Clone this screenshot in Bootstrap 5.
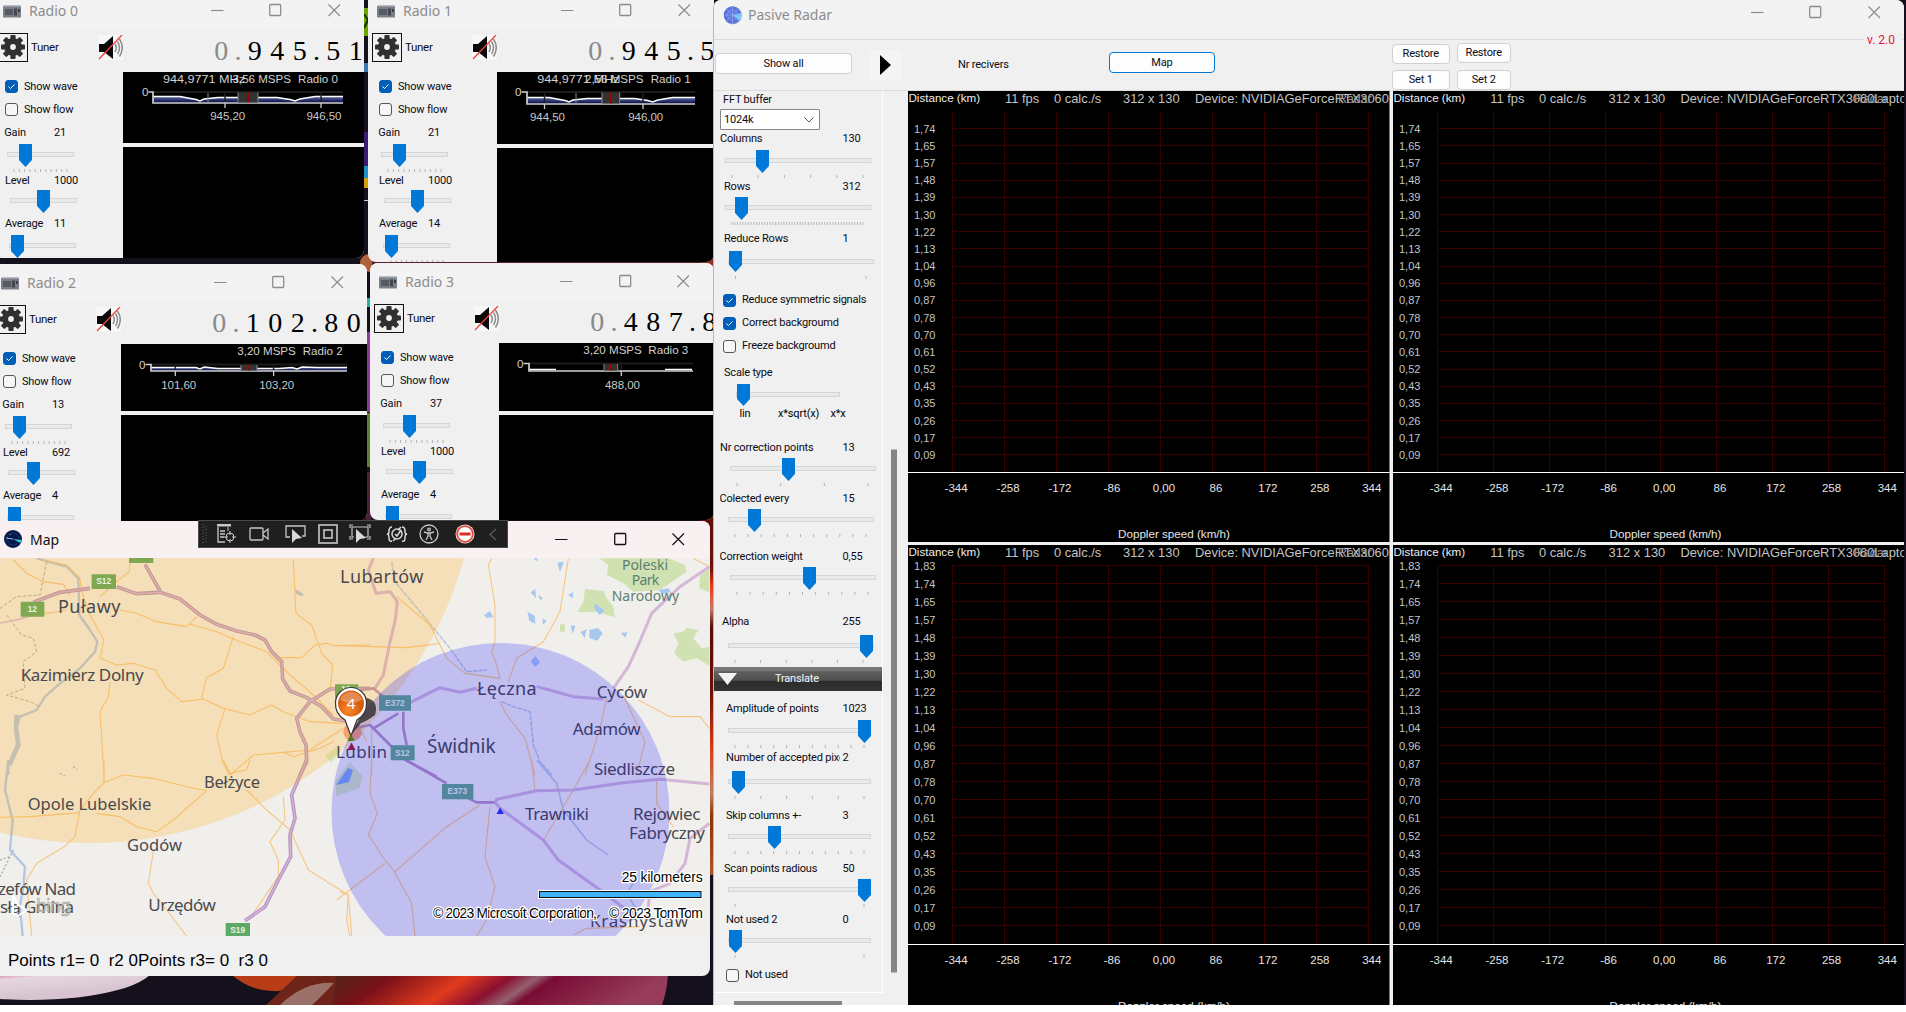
<!DOCTYPE html>
<html lang="en">
<head>
<meta charset="utf-8">
<title>Pasive Radar</title>
<link href="https://cdn.jsdelivr.net/npm/bootstrap@5.3.0/dist/css/bootstrap.min.css" rel="stylesheet">
<style>
html,body{width:1906px;height:1012px;overflow:hidden;margin:0;background:#fff}
body{font-family:Roboto,"Liberation Sans",sans-serif;font-size:11px;line-height:16px;letter-spacing:-.18px;color:#0b0b14}
svg{display:block;flex:none}
.desk{position:relative;width:1906px;height:1005px;overflow:hidden;background:#15111c}
.wall{position:absolute;left:0;top:0}
.win{position:absolute;background:#f0f0f0;overflow:hidden;border-radius:8px;display:flex;flex-direction:column}
.tbar{flex:none;background:#f3f3f3;color:#8c8c8c;font:14px/20px "Noto Sans",sans-serif;letter-spacing:0;white-space:pre}
.w-radio .tbar{height:37px;padding:9px 1px 8px 9px}
.w-radio .wbtns{margin-top:2px}
.wbtns{display:flex;margin-left:auto;color:#8c8c8c}
.wbtns svg{width:58.5px;height:14px}
.w-radio .tools{height:43px;flex:none;padding-bottom:7px}
.gearbox{width:30.5px;height:29px;margin-left:3.5px;border:1px solid #111}
.tune{margin-left:3px;width:67px;font-size:11.5px;letter-spacing:-.3px}
.freq{margin-left:87px;margin-top:3px;font:28px/30px "Liberation Serif",serif;letter-spacing:0;color:#000}
.freq span{width:22.5px;text-align:center;flex:none}
.freq .dot{width:11px}
.freq .dim{color:#8a8a8a}
.w-radio .side{width:129px;flex:none;padding-top:3px}
.view{background:#000}
.ck{height:23px;display:flex;align-items:center}
.ck i{width:13px;height:13px;border:1px solid #555;border-radius:3px;background:#f6f6f6;margin-right:6px;flex:none}
.ck i.on{background:#005fb8;border-color:#005fb8}
.lab{height:16px;line-height:18px;display:flex;white-space:nowrap}
.lab span:first-child{overflow:hidden;flex:none}
.w-main{left:713px;top:0;width:1191px;height:1005px;border-radius:8px 8px 0 0;border-left:1px solid #b9b9b9}
.w-main .tbar{height:33px;padding:5px 1px 0 9px}
.gbox{position:relative;height:52px;margin-top:6px;border-top:1px solid #dcdcdc;border-bottom:1px solid #dcdcdc;flex:none}
.ver{position:absolute;right:2px;top:-8px;padding:0 7px 0 3px;background:#f0f0f0;color:#dc143c;font-size:12px;letter-spacing:0}
.pbtn{background:#fdfdfd;border:1px solid #d0d0d0;border-radius:4px;height:20px;line-height:18px;padding:0;font-size:11px;text-align:center;color:#0b0b14;letter-spacing:-.15px}
.panel{width:169px;height:902px;border-right:1px solid #fff;border-bottom:1px solid #fff;overflow:hidden}
.combo{width:100px;height:21px;border:1px solid #868686;background:#fff;margin-left:6px;padding:0 5px 0 3px;border-radius:1px}
.trans{height:24px;margin-top:2px;color:#f5f5f5;background:linear-gradient(#777 0,#777 15%,#5f5f5f 20%,#505050 55%,#2c2c2c 60%,#333)}
.trans span{margin-left:38px}
.gutter{width:25px}
.plots{display:grid;grid-template-columns:481.5px 511px;grid-template-rows:451px 460px;gap:3px 3.5px}
.w-map{left:-6px;top:521px;width:715.5px;height:455px;border-radius:8px}
.w-map .tbar{height:37px;background:#f9f0f2;color:#111;padding:9px 2px 0 10px}
.w-map .wbtns{color:#111;margin-top:2px}
.status{height:40px;padding:15px 0 0 14px;font:17px/20px "Liberation Sans",sans-serif;letter-spacing:0;white-space:pre;color:#000}
.dbg{position:absolute;left:198px;top:520px;height:28px;width:310px;background:#1f1f1f;border:1px solid #4a4a4a;align-items:center;display:flex}
.dbg svg{width:32px;height:20px}
.dbg .sep{width:1px;height:16px;background:#3a3a3a;margin:0 2px 0 3px}
.aria text,.wave text{font-family:"Liberation Sans",sans-serif;letter-spacing:0}
.mapv text{font-family:"Noto Sans",sans-serif;fill:#4a4a4e;letter-spacing:0}
.mapv .rd{fill:none;stroke:#f6c682;stroke-width:3.3;stroke-linejoin:round}
.mapv .hw{fill:none;stroke:#b894bf;stroke-width:11;stroke-linejoin:round}
.mapv .hi{fill:none;stroke:#d3b6d8;stroke-width:4;stroke-linejoin:round}
.mapv .rv{fill:none;stroke:#b4c6e0;stroke-width:7;stroke-linejoin:round}
.mapv .pk{fill:#d0e2b2}
.mapv .lk{fill:#a8c7ef}
.mapv .bt text{fill:#e9f4e4;font:bold 25px "Liberation Sans",sans-serif;text-anchor:middle}
.mapv .sys{font:14px "Liberation Sans",sans-serif;fill:#000;stroke:#fff;stroke-width:2.5px;paint-order:stroke}
</style>
<script src="https://cdn.jsdelivr.net/npm/bootstrap@5.3.0/dist/js/bootstrap.bundle.min.js"></script>
</head>
<body>
<svg width="0" height="0" class="position-absolute">
<defs>
<symbol id="gear" viewBox="-12 -12 24 24"><g fill="#303030"><circle r="9"/><g id="teeth"><rect x="-2.6" y="-12" width="5.2" height="24" rx="1"/><rect x="-12" y="-2.6" width="24" height="5.2" rx="1"/></g><use href="#teeth" transform="rotate(45)"/></g><circle r="2.9" fill="#f0f0f0"/></symbol>
<symbol id="spk" viewBox="0 0 25 25"><rect width="25" height="25" fill="#f7f7f7"/><path d="M1 9h5l9-8v23l-9-7H1z" fill="#0a0a0a"/><path d="M17 9q2.5 3.5 0 8M19.500 6.500q4 6 0 12.500M21.500 4q5.500 8.500 0 17.500" fill="none" stroke="#8b8b8b" stroke-width="1.500"/><path d="M1 24L24 0" stroke="#f04040" stroke-width="1.300"/></symbol>
<symbol id="rad" viewBox="0 0 18 13"><rect width="18" height="13" rx="1" fill="#b9bbc0"/><rect x="0" y="1.500" width="18" height="10.500" fill="#7b8088"/><rect x="2" y="4" width="8" height="6" fill="#575b63"/><rect x="11" y="3.500" width="3" height="7" fill="#444850"/><rect x="15" y="4" width="2" height="3" fill="#3b3e45"/></symbol>
<symbol id="wmin" viewBox="0 0 58.5 14"><path d="M23 7.500h12.500" stroke="currentColor" stroke-width="1.200"/></symbol>
<symbol id="wmax" viewBox="0 0 58.5 14"><rect x="23.700" y="1.500" width="11" height="11" rx="1" fill="none" stroke="currentColor" stroke-width="1.300"/></symbol>
<symbol id="wcls" viewBox="0 0 58.5 14"><path d="M23.500 1.500l11.500 11.500M35 1.500L23.500 13" stroke="currentColor" stroke-width="1.200"/></symbol>
<linearGradient id="navy" x2="0" y2="1"><stop offset="0" stop-color="#5a6aa5"/><stop offset="1" stop-color="#06063c"/></linearGradient>
<radialGradient id="pin" cx=".4" cy=".75"><stop offset="0" stop-color="#f98a2c"/><stop offset="1" stop-color="#d65a08"/></radialGradient>
<linearGradient id="w1" x2=".3" y2="1"><stop offset="0" stop-color="#c81844"/><stop offset=".6" stop-color="#d83a62"/><stop offset=".75" stop-color="#e6d6df"/><stop offset="1" stop-color="#d8c4d0"/></linearGradient>
<linearGradient id="w2" y2=".15"><stop offset="0" stop-color="#4a2a18"/><stop offset=".2" stop-color="#7a1018"/><stop offset=".42" stop-color="#e03a1e"/><stop offset=".55" stop-color="#8a1030"/><stop offset=".63" stop-color="#946070"/><stop offset=".68" stop-color="#7a0c34"/><stop offset="1" stop-color="#963c5a"/></linearGradient>
<linearGradient id="w3" x2="0" y2="1"><stop offset="0" stop-color="#5c0c08"/><stop offset=".17" stop-color="#6c1408"/><stop offset=".22" stop-color="#f03814"/><stop offset=".28" stop-color="#c87868"/><stop offset=".33" stop-color="#5a0c06"/><stop offset=".5" stop-color="#6c1004"/><stop offset=".66" stop-color="#d83c14"/><stop offset=".78" stop-color="#c08060"/><stop offset=".84" stop-color="#8c3404"/><stop offset="1" stop-color="#b05030"/></linearGradient>
</defs>
</svg>
<div class="desk">
<svg class="wall" width="1906" height="1005">
<g><rect x="363" y="8" width="6" height="28" fill="#6aa800"/><path d="M364 14l4 6-4 8" stroke="#16300a" fill="none" stroke-width="2"/><rect x="363" y="63" width="6" height="9" fill="#3a78b8"/><rect x="363" y="132" width="6" height="56" fill="#3c1a78"/><rect x="363" y="166" width="6" height="12" fill="#1e92c8"/><rect x="363" y="178" width="6" height="10" fill="#d8a000"/><rect x="363" y="200" width="6" height="1" fill="#ccc"/></g>
<circle cx="369" cy="263" r="9" fill="#b0603a"/><rect x="372" y="261" width="342" height="5" fill="#54202a"/><rect x="700" y="255" width="14" height="16" fill="#93301e"/>
<rect x="366" y="298" width="5" height="9" fill="#22b5a5"/><rect x="366" y="332" width="5" height="80" fill="#8a3a98"/><rect x="366" y="413" width="5" height="54" fill="#5c8034"/><rect x="366" y="472" width="5" height="50" fill="#4c2036"/>
<rect x="700" y="505" width="14" height="370" fill="url(#w3)"/>
<ellipse cx="30" cy="966" rx="124" ry="34" fill="url(#w1)"/><path d="M232 975q25 22 62 14l46-18z" fill="#b83c16"/><path d="M266 1005l34-32h60v32z" fill="#6e2418"/><path d="M280 1005q25-24 54-22-15 16-22 22z" fill="#9a7068"/><path d="M338 970h330q0 18-6 35H332z" fill="url(#w2)"/>
</svg>
<div id="radios"></div>

<section class="win w-map">
<header class="tbar d-flex">
<svg width="18" height="18" viewBox="-9 -9 18 18" class="mt-0"><circle r="9" fill="#061a4c"/><circle r="6" fill="none" stroke="#2a3c80" stroke-width=".6"/><path d="M0 0L7.500 4 8.700 1z" fill="#38d0d8"/><path d="M-7-1L0 0M-3-5l.6.6" stroke="#9fb8d8"/></svg>
<span class="ps-2">Map</span>
<span class="wbtns"><svg><use href="#wmin"/></svg><svg><use href="#wmax"/></svg><svg><use href="#wcls"/></svg></span>
</header>
<svg class="mapv" width="715.5" height="378" viewBox="-6 558 715.5 378">
<rect x="-6" y="558" width="716" height="378" fill="#f1efeb"/>
<g transform="translate(340 515) scale(.33333)">
<path class="pk" d="M778 130L805 150 800 180 850 205 880 230 960 225 1040 170 1035 150 985 130zM735 222L790 228 800 250 820 275 825 307 770 290 712 292 730 260zM1080 180L1108 160V232L1078 220zM1000 355L1030 350 1040 338 1075 345 1060 370 1085 400 1108 395V452L1070 430 1030 440 1002 415 1015 385zM660 328h15v22h-15z"/>
<path class="lk" d="M652 143L672 140 660 170zM580 130h12v10zM572 232l14-10 2 28zM594 240l14 8-6 10zM684 240l15-8v18zM432 300l18-12 10 18-20 2zM562 290l22 12 2 25-18-10zM608 310l12 8-12 12zM692 332h14l-8 25zM722 352l18-10-6 28zM748 345l26-6 14 16-16 22-24-8zM842 354l20-2-6 16zM765 265l28 22-14 14-16-20zM572 440l14-18 14 20-14 14zM955 225l30-5 8 12-26 5z"/>
</g>
<path class="pk" d="M325 756l12-10 4 5-10 12zM336 780l14-18 12 14-2 12-24 8z" opacity=".8"/><path d="M336 785l12-17 5 2-4 12z" fill="#7fabee"/>
<g transform="translate(0 515) scale(.33333)">
<path class="rv" d="M110 130L200 155 235 190 238 300 270 345 292 380 285 410 240 460 180 505 135 545 110 585 60 605 48 640 55 680 25 750V780" /><path d="M50 600L48 640 55 690 28 750" stroke="#b4c6e0" stroke-width="14" fill="none"/>
<path d="M140 140L120 240 50 245 0 280M20 300L65 360 100 370 110 410 70 440 75 520 20 540 90 560 120 575" fill="none" stroke="#b3a898" stroke-width="3" stroke-dasharray="10 6"/>
<path d="M885 222l25 14-2 8-20-8z" fill="#b4c6e0"/>
<path class="rd" d="M40 135L80 175 130 200 190 208 210 240M130 135L200 150 240 190 245 230 270 300 312 375 300 430 350 450 400 445 465 465 500 520 545 560 610 552 670 580 750 600 815 570 850 590 930 620 1030 625M390 145L388 170 350 200 300 245M360 285L410 295 470 320 560 335 590 305M570 328L650 350 720 380 800 410 870 480 940 540 1000 600M700 365L670 460 618 490 605 552M100 300L160 292 200 285M840 428L905 428 945 390 980 385 1000 392 1110 390M880 135L888 295 935 330 955 385 965 415 998 450 990 530M330 500L325 545 300 590 312 780M675 580L650 660 668 740 688 780M690 780L760 720 850 712 930 705 1030 640M850 712L880 725 960 700 1000 680"/>
<path class="hw" d="M100 262L180 232 270 220M350 215L410 236 480 232 540 252 600 300 650 328 710 348 765 360 795 375 815 410 845 440 848 492 870 528 920 548 965 575 1000 612 1040 618M435 148L480 228M1110 520L990 522 930 560 890 610 900 650 918 690 920 740 900 780"/>
<path class="hi" d="M100 262L180 232 270 220M350 215L410 236 480 232 540 252 600 300 650 328 710 348 765 360 795 375 815 410 845 440 848 492 870 528 920 548 965 575 1000 612 1040 618M435 148L480 228M1110 520L990 522 930 560 890 610 900 650 918 690 920 740 900 780M-18 328L60 312 100 300" />
<circle cx="1058" cy="650" r="28" fill="#f58060" opacity=".7"/>
</g>
<g transform="translate(0 760) scale(.33333)">
<path class="rv" d="M25 0L15 90 38 180 30 270 75 320 70 380 60 440 68 528"/><path d="M40 270L0 350M180 40l15 8M220 20l12 8M0 300l30-10" stroke="#a4aab2" stroke-width="4" stroke-dasharray="6 6"/>
<path class="rd" d="M312 0V68L280 100 240 150 225 230 190 262 110 310 80 360 95 528M312 68L370 45 460 55 560 80 620 92 520 180 470 215 410 200 360 170 290 160M-18 172L90 170 240 158M460 275L445 370 460 400 500 450 560 528M740 90L800 150 870 210 925 330 1045 405 1040 480 1050 528M850 110L855 180 810 245 835 300 835 350 760 460M670 0L690 40 740 30 750 0"/>
<path class="hw" d="M920 0L875 105 885 175 870 225 872 290 835 360 795 440 735 482"/><path class="hi" d="M920 0L875 105 885 175 870 225 872 290 835 360 795 440 735 482"/>
</g>
<g transform="translate(340 515) scale(.33333)">
<path class="rv" stroke-dasharray="14 3" style="stroke-width:4.500" d="M155 140L165 200 240 290 330 400 380 470 440 465M485 560L520 575 570 590 580 690 600 740 635 780"/>
<path class="rd" d="M455 130L445 150 465 270 465 380 455 410 470 450 480 490M685 130L660 290 610 380 530 430 505 500M0 392L200 398 300 385M170 245L270 330 320 430 375 475 480 490M480 560L500 600 555 670 585 780M800 550L780 640 735 780M850 540L915 680 890 780M895 555L990 605 1080 605 1108 640M1060 130L1108 155M95 640V780M60 640l20 40"/>
<path class="hi" style="stroke-width:9" d="M105 520L130 480 150 380 165 320 172 260 150 230 108 235 85 165 100 130M205 565L300 518 360 532 410 520M590 515L640 528 700 545 790 552M820 520L865 455 895 390 935 295 1020 215 1108 155"/>
<path class="hw" style="stroke-width:8" d="M60 525L100 520 130 545M190 590V640L200 690M100 640L175 595M40 640L90 630 150 690 205 740 290 785"/>
</g>
<g transform="translate(340 760) scale(.33333)">
<path class="rv" style="stroke-width:4.500" d="M590 0L650 70 670 150 740 240 805 285M880 370L860 400 890 450"/>
<path class="rd" d="M575 0L585 90M750 0L700 90 610 240M950 60V130L1000 200M95 0L90 100 112 160 85 225 135 300 160 330 215 430 225 528M420 135L320 200 165 335M-10 420L135 310M0 395L25 405 35 528M450 140L435 290 465 380 440 480 410 528M700 525L740 505 900 500"/>
<path class="hw" style="stroke-width:8" d="M180 -10L320 70M380 112L410 127H465"/>
<path class="hi" style="stroke-width:9" d="M465 127L470 118 590 92 700 90 850 68 960 58 1108 72M465 127L480 145 610 240 655 300 780 390 860 450M1108 190L1050 235 1035 310 990 370 930 395 920 480"/>
</g>
<circle cx="90" cy="455" r="388" fill="#ffa500" opacity=".21"/>
<g font-size="17">
<text x="20.700" y="680.500" textLength="123">Kazimierz Dolny</text><text x="58" y="612.500" font-size="18" textLength="62.500">Puławy</text><text x="340" y="582.700" font-size="18" textLength="83.500">Lubartów</text><text x="477" y="695" font-size="18" textLength="59.500">Łęczna</text><text x="596.700" y="698" textLength="50.500">Cyców</text><text x="572.700" y="735" textLength="68">Adamów</text><text x="594" y="775" textLength="81">Siedliszcze</text><text x="427" y="752.700" font-size="19" textLength="68.500" lengthAdjust="spacingAndGlyphs">Świdnik</text><text x="336" y="757.700" textLength="51">Lublin</text><text x="525" y="820" textLength="64">Trawniki</text><text x="633" y="820" textLength="67.500">Rejowiec</text><text x="629" y="838.500" textLength="76">Fabryczny</text><text x="27.700" y="810" font-size="16.500" textLength="123.500">Opole Lubelskie</text><text x="204" y="787.700" font-size="16.500" textLength="56">Bełżyce</text><text x="127" y="850.500" font-size="16.500" textLength="55">Godów</text><text x="148.300" y="910.500" textLength="67.500">Urzędów</text><text x="-2" y="894.700" textLength="78">zefów Nad</text><text x="0" y="913" textLength="74">słą Gmina</text><text x="590" y="927" textLength="98">Krasnystaw</text>
<g font-size="14"><text style="fill:#5c7f70" x="622" y="570" textLength="46">Poleski</text><text style="fill:#5c7f70" x="631.700" y="585" textLength="27.500">Park</text><text style="fill:#5c7f70" x="611.700" y="600.500" textLength="67.500">Narodowy</text></g>
<path d="M13 895v18l5 3 9-6-9-5-5-10z" fill="none" stroke="#fff" stroke-width="2"/><text x="36" y="912" font-size="18" style="fill:#ddd;fill-opacity:.5;stroke:#999;stroke-width:.6px" textLength="35">bing</text>
</g>
<g class="bt"><g transform="translate(0 515) scale(.33333)"><path fill="#7fa850" d="M275 178h73v44h-73zM62 260h71v45H62zM387 120h73v24h-73zM1005 508h70v40h-70z"/><text x="311" y="207">S12</text><text x="97" y="290">12</text><text x="1038" y="532">19</text></g>
<g transform="translate(340 515) scale(.33333)"><path fill="#66a886" d="M117 541h96v46h-96zM152 691h72v45h-72z"/><text x="165" y="572">E372</text><text x="187" y="722">S12</text></g>
<g transform="translate(340 760) scale(.33333)"><path fill="#66a886" d="M306 72h94v46h-94z"/><text x="352" y="102">E373</text></g>
<g transform="translate(0 760) scale(.33333)"><path fill="#5fa968" d="M677 489h73v39h-73z"/><text x="713" y="518">S19</text></g></g>
<circle cx="500.500" cy="812" r="169" fill="#0000ff" opacity=".2"/>
<path d="M351 735l8-16q-2-16 8-21 12 3 8 17-8 6-14 8z" fill="#222" opacity=".75"/>
<path d="M351 736L345 720Q335 714 335.500 703A15.500 15.500 0 0 1 366.500 703Q367 714 357 720z" fill="#fff" stroke="#333" stroke-width="1.200"/><circle cx="351" cy="703.500" r="13" fill="url(#pin)"/><path d="M340 700a11.500 11.500 0 0 1 22 0q-11 5-22 0z" fill="#fff" opacity=".3"/><text x="351" y="709" text-anchor="middle" font-size="15" style="fill:#fff">4</text>
<path d="M347.500 741l3.500-7 3.500 7z" fill="#4e7a20"/><path d="M347.500 750l4-7.500 4 7.500z" fill="#8a1a50"/><path d="M496.500 814l3.700-6.500 3.700 6.500z" fill="#2a2af5"/>
<rect x="538" y="890" width="164.500" height="9" fill="#fff"/><rect x="539.500" y="891.500" width="161.500" height="6" fill="#42b4fb" stroke="#111"/>
<text class="sys" x="621.700" y="881.500" textLength="81">25 kilometers</text><text class="sys" x="433" y="918" textLength="164">© 2023 Microsoft Corporation,</text><text class="sys" x="609" y="918" textLength="94">© 2023 TomTom</text>
</svg>
<footer class="status">Points r1= 0  r2 0Points r3= 0  r3 0</footer>
</section>

<div class="dbg">
<svg style="width:12px" viewBox="0 0 12 20"><path d="M4 0v20M7 2v18" stroke="#666" stroke-dasharray="1 2"/></svg>
<svg viewBox="0 0 32 20" fill="none" stroke="#c8c8c8"><path d="M6 1h14" stroke-width="3"/><path d="M7 3v15h7M9 7h5M9 10h5M9 13h4" stroke-width="1.300"/><circle cx="19" cy="13" r="4"/><path d="M19 7v4M19 15v4M13 13h4M21 13h4M17 3v4"/></svg>
<svg viewBox="0 0 32 20" fill="none" stroke="#c8c8c8" stroke-width="1.300"><rect x="7" y="4" width="13" height="12" rx="1"/><path d="M20 9l5-4v10l-5-4"/></svg>
<span class="sep"></span>
<svg viewBox="0 0 32 20"><path d="M10 13H6V2h19v10h-3" fill="none" stroke="#c8c8c8" stroke-width="1.300"/><path d="M12 5v14l4-4 6-1z" fill="#d8d8d8"/></svg>
<svg viewBox="0 0 32 20" fill="none" stroke="#c8c8c8" stroke-width="1.600"><rect x="7" y="1" width="18" height="18"/><rect x="12" y="6" width="8" height="8"/></svg>
<svg viewBox="0 0 32 20"><path d="M10 13H8V3h16v10h-3M6 4V1h3M23 1h3v3M6 12v3h3M26 12v3h-3" fill="none" stroke="#c8c8c8" stroke-width="1.200"/><path d="M12 5v14l4-4 6-1z" fill="#d8d8d8"/></svg>
<span class="sep"></span>
<svg viewBox="0 0 32 20" fill="none" stroke="#d8d8d8" stroke-width="1.500"><path d="M11 3q-3 0-3 4t-2 3q2 0 2 4t3 3M21 3q3 0 3 4t2 3q-2 0-2 4t-3 3"/><circle cx="16" cy="10" r="5"/><path d="M14 10l2 2 4-6M12 17l3-3M20 3l-3 3"/></svg>
<svg viewBox="0 0 32 20" fill="none" stroke="#c8c8c8" stroke-width="1.300"><circle cx="16" cy="10" r="9"/><circle cx="16" cy="5.500" r="1.300"/><path d="M11 8l4 1v3l-2 4M21 8l-4 1v3l2 4M15 9h2"/></svg>
<span class="sep mx-0"></span>
<svg viewBox="0 0 32 20" class="ms-1"><circle cx="16" cy="10" r="9.500" fill="#f8e8e6"/><circle cx="16" cy="10" r="7.800" fill="#fff" stroke="#e04a40" stroke-width="1.800"/><path d="M10.500 10h11" stroke="#e02a20" stroke-width="3"/></svg>
<svg style="width:26px" viewBox="0 0 26 20"><path d="M15 5l-6 5.500 6 5.500" fill="none" stroke="#5c5c5c" stroke-width="1.300"/></svg>
</div>

<main class="win w-main">
<header class="tbar d-flex">
<svg width="19" height="20" viewBox="-9.500 -10 19 20"><circle cx=".5" cy=".5" r="9" fill="#b9bccb"/><circle r="8.800" fill="#5a73dc"/><path d="M0 0L8.600-2A8.800 8.800 0 0 1 7 5.400z" fill="#6fd6f5"/><path d="M-8 0H8M0-8V8M-6-6L6 6M6-6L-6 6" stroke="#8d9fee" stroke-width=".8"/><circle r="5" fill="none" stroke="#8d9fee" stroke-width=".7"/></svg>
<span style="margin-left:6px">Pasive Radar</span>
<span class="wbtns"><svg><use href="#wmin"/></svg><svg><use href="#wmax"/></svg><svg><use href="#wcls"/></svg></span>
</header>
<div class="gbox d-flex align-items-start">
<span class="ver">v. 2.0</span>
<button class="pbtn" style="width:137px;margin:13px 0 0 1px;height:21px">Show all</button>
<svg width="32" height="30" viewBox="0 0 32 30" style="margin:10px 0 0 17px"><rect width="32" height="30" fill="#f4f4f4"/><path d="M11 5v20l11-10z" fill="#000"/></svg>
<span style="margin:17px 0 0 57px;width:151px">Nr recivers</span>
<button class="pbtn" style="width:106px;height:21px;margin-top:12px;border-color:#0078d4">Map</button>
<div class="d-flex flex-column" style="margin:4px 0 0 177px;gap:6px"><button class="pbtn" style="width:57.5px">Restore</button><button class="pbtn" style="width:57.5px">Set 1</button></div>
<div class="d-flex flex-column" style="margin:3px 0 0 7.500px;gap:7px"><button class="pbtn" style="width:53.500px">Restore</button><button class="pbtn" style="width:53.500px">Set 2</button></div>
</div>
<div class="d-flex">
<aside>
<div class="panel">
<div class="lab ps-2" style="margin-bottom:2px"><span style="padding-left:1px">FFT buffer</span></div>
<div class="combo d-flex justify-content-between align-items-center"><span>1024k</span><svg width="10" height="6" viewBox="0 0 10 6"><path d="M.5.500L5 5 9.500.500" fill="none" stroke="#555"/></svg></div>
<div id="grp1"></div>
<div class="trans d-flex align-items-center"><svg width="19" height="12" viewBox="0 0 19 12" class="ms-1"><path d="M0 0h19L9.500 12z" fill="#f2f2f2"/></svg><span>Translate</span></div>
<div id="grp2"></div>
</div>
<svg width="169" height="12"><rect x="20" y="8" width="108" height="4" fill="#868686"/></svg>
</aside>
<div class="gutter"><svg width="25" height="914"><rect x="8" y="358.500" width="6" height="523" fill="#868686"/></svg></div>
<div class="plots" id="plots"></div>
</div>
</main>
</div>
<script>
const thumb=(x,y,h=23)=>`<path d="M${x} ${y}h13v${h-7}l-6.500 7-6.500-7z" fill="#0078d7"/>`;
// One labelled trackbar: h is the row height, coordinates are relative to the row's left edge
function slider(o){
  const b=o.b||0, ty=2+b; let t='';
  if(o.n>1) for(let i=0;i<o.n;i++){const x=o.t0+(o.t1-o.t0)*i/(o.n-1);t+=`<rect x="${x-.5}" y="${ty+25}" width="1" height="${o.th||3}" fill="#b4b4b4"/>`}
  return `<div class="lab"><span style="margin-left:${o.lx}px;width:${o.vx-o.lx-(o.gap||0)}px">${o.l}</span><span style="margin-left:${o.gap||0}px">${o.v??''}</span></div>
  <svg width="169" height="${o.h-16}"><rect x="${o.x0+.5}" y="${ty+8.5}" width="${o.x1-o.x0-1}" height="4" fill="#e7eaea" stroke="#d6d6d6"/>${t}${thumb(o.p,ty,o.ph)}${o.extra||''}</svg>`;
}
const check=(l,on,m)=>`<div class="ck" style="margin-left:${m}px"><i class="${on?'on':''}">${on?'<svg width="11" height="11" viewBox="0 0 11 11"><path d="M2.500 5.500l2 2 4-4" fill="none" stroke="#fff"/></svg>':''}</i>${l}</div>`;

const S=(l,lx,v,h,x0,x1,p,n,t0,t1,more)=>slider({l,lx,v,h,x0,x1,p,n,t0,t1,vx:128.5,b:2,...more});
grp1.innerHTML=
 S('Columns',6,130,48,11,157,42,6,18,149)+
 S('Rows',10,312,52,11,157,21,49,18,149,{b:1})+
 S('Reduce Rows',10,1,58.5,14,160,15,2,21.5,152,{b:3,ph:21})+
 check('Reduce symmetric signals',1,9)+check('Correct backgroumd',1,9)+check('Freeze backgroumd',0,9)+
 '<div style="height:6px"></div>'+
 S('Scale type',10,'',75,22,126,23,0,0,0,{ph:22,extra:'<g font-size="11"><text x="25.500" y="37">lin</text><text x="64" y="37">x*sqrt(x)</text><text x="116.500" y="37">x*x</text></g>'})+
 S('Nr correction points',6,13,51,16,162,68,4,23,154,{b:1})+
 S('Colected every',5.5,15,58,14,160,34,11,21,152,{b:1})+
 S('Correction weight',5.5,'0,55',65,16,162,89,11,23,154,{b:1})+
 S('Alpha',8,255,52,14,160,146,6,21,149,{b:4});
grp2.innerHTML='<div style="height:9px"></div>'+
 S('Amplitude of points',12,1023,49,14,157,144,11,21,150)+
 S('Number of accepted pixels',12,2,58,14,157,18,6,21,150,{b:4,gap:3})+
 S('Skip columns +-',12,3,53,14,157,54,11,21,150,{b:1})+
 S('Scan points radious',10,50,51,14,157,144,2,21,150,{b:1})+
 S('Not used 2',12,0,53,14,157,15,2,21,150,{b:1})+check('Not used',0,12);

// Radio receiver windows; graph coordinates are desktop pixels
const R=[
 {x:-6,y:-8,w:370,h:266,f:'0.945.51',g:21,gp:19,l:1000,lp:37,a:11,ap:11,vh:71,gx:123,gy:72,m:163,ms:'3,56 MSPS',sx:232.5,rx:298,zx:142,ax:153,bx:343,top:92,base:103,ly:120,dips:[200,295],box:[238,258],red:248,tk:[[225,'945,20',227.7],[321,'946,50',324]],gt:208,mag:5},
 {x:368,y:-8,w:346,h:270,f:'0.945.51',g:21,gp:19,l:1000,lp:37,a:14,ap:11,vh:72,gx:497,gy:72,m:537.3,ms:'2,56 MSPS',sx:585,rx:650.7,zx:515,ax:527,bx:695,top:92,base:104,ly:121,dips:[569,652.7],box:[602,619.7],red:611,tk:[[544.5,'944,50',547.5],[643,'946,00',645.7]],gt:576,mag:5},
 {x:-8,y:264,w:375,h:257,f:'0.102.80',g:13,gp:15,l:692,lp:29,a:4,ap:10,vh:67,gx:121,gy:344,ms:'3,20 MSPS',sx:237.3,rx:302.7,zx:139,ax:151,bx:347,top:364.5,base:371,ly:388.5,dips:[200,297],box:[241,257],red:249,tk:[[175.3,'101,60',178.7],[273.6,'103,20',276.7]],mag:2},
 {x:370,y:263,w:343.5,h:257,f:'0.487.80',g:37,gp:27,l:1000,lp:37,a:4,ap:10,vh:68,gx:499,gy:343,ms:'3,20 MSPS',sx:583.3,rx:648.3,zx:517,ax:529,bx:693,top:363.5,base:371,ly:388.5,box:[604,617.7],red:611,tk:[[621.3,'488,00',622.5]]}];
function wave(r,i){
 const W=r.w-129,T=(x,y,s,l,a='')=>`<text x="${x}" y="${y}" ${l?`textLength="${l}"`:''} ${a}>${s}</text>`;
 let s=`<svg class="wave" width="${W}" height="${r.vh}" viewBox="${r.gx} ${r.gy} ${W} ${r.vh}"><rect x="${r.gx}" y="${r.gy}" width="${W}" height="${r.vh}" fill="#000"/><g font-size="11.6" fill="#d2d2d2">`;
 const hy=r.gy+11.4;
 if(r.m)s+=T(r.m,hy,'944,9771 MHz',82,'lengthAdjust="spacingAndGlyphs"');
 s+=T(r.sx,hy,r.ms,58.5)+T(r.rx,hy,'Radio '+i,40)+T(r.zx,r.top+4,'0');
 s+=`</g><rect x="${r.ax}" y="${r.top-1}" width="${r.bx-r.ax}" height="2" fill="#1c1c1c"/>`;
 if(r.dips){const y0=r.base-r.mag-1.5,a=r.ax,b=r.bx,[d,e]=r.dips,lo=r.base-2,m=(d+e)/2;
  const p=`M${a} ${y0}L${d-20} ${y0}L${d-4} ${lo-1.5}L${d} ${lo}L${d+4} ${lo-2}L${d+18} ${y0+1}L${m} ${y0+1}L${e-18} ${y0+1}L${e-5} ${lo-1.5}L${e} ${lo}L${e+5} ${lo-2}L${e+20} ${y0}L${b} ${y0}`;
  s+=`<path d="${p}V${r.base}H${a}z" fill="url(#navy)"/><path d="${p}" fill="none" stroke="#fff" stroke-width="1.600"/>`;
 }else s+=`<path d="M${r.ax} ${r.base-1.5}h27M${r.bx-28} ${r.base-1.5}h27" stroke="#fff" stroke-width="1.500"/>`;
 s+=`<path d="M${r.zx+6.5} ${r.top}H${r.ax}V${r.base}H${r.bx}" fill="none" stroke="#cfcfcf" stroke-width="1.700"/>`;
 for(const[x,l,c]of r.tk)s+=`<path d="M${x} ${r.top+1}V${r.base-1}" stroke="#222" stroke-width="1.500"/><path d="M${x} ${r.base}v5" stroke="#cfcfcf" stroke-width="1.300"/>`+T(c,r.ly,l,35,'text-anchor="middle" font-size="11.5" fill="#c8c8c8"');
 if(r.gt)s+=`<path d="M${r.gt} ${r.top+1}V${r.base-1}" stroke="#888"/>`;
 const [p,q]=r.box,hh=r.base-r.top-1;
 s+=`<rect x="${p}" y="${r.top+.5}" width="${q-p}" height="${hh}" fill="#333"/><path d="M${p} ${r.top+.5}v${hh}M${q} ${r.top+.5}v${hh}" stroke="#888"/><rect x="${r.red-1}" y="${r.top+.5}" width="2" height="${hh}" fill="#a00000"/>`;
 return s+'</svg>';
}
radios.innerHTML=R.map((r,i)=>{
 const o={vx:60,x0:13,x1:80,h:48,n:11,t0:20,t1:73};
 const digits=[...r.f].map((c,k)=>`<span class="${c=='.'?'dot ':''}${k<2?'dim':''}">${c}</span>`).join('');
 return `<section class="win w-radio" style="left:${r.x}px;top:${r.y}px;width:${r.w}px;height:${r.h}px">
 <header class="tbar d-flex"><svg width="18" height="13" class="mt-1"><use href="#rad"/></svg><span class="ps-2">Radio ${i}</span><span class="wbtns"><svg><use href="#wmin"/></svg><svg><use href="#wmax"/></svg><svg><use href="#wcls"/></svg></span></header>
 <div class="tools d-flex align-items-center"><div class="gearbox d-flex align-items-center justify-content-center flex-shrink-0"><svg width="24" height="24"><use href="#gear"/></svg></div><span class="tune flex-shrink-0">Tuner</span><svg width="25" height="25"><use href="#spk"/></svg><div class="freq d-flex pt-1">${digits}</div></div>
 <div class="d-flex flex-grow-1"><div class="side">${check('Show wave',1,11)}${check('Show flow',0,11)}<div style="height:3px"></div>
 ${slider({...o,l:'Gain',lx:10.3,v:r.g,p:r.gp+6,b:2})}${slider({...o,l:'Level',lx:11,v:r.l,p:r.lp+6,x0:16,x1:83,h:43,n:22,t0:23,t1:76,th:1})}${slider({...o,l:'Average',lx:11,v:r.a,p:r.ap+6,x0:15,x1:82,b:2,t0:23,t1:75})}</div>
 <div class="d-flex flex-column" style="gap:4px">${wave(r,i)}<div class="view flex-grow-1"></div></div></div></section>`}).join('');

// Radar plots
const dist=['1,83','1,74','1,65','1,57','1,48','1,39','1,30','1,22','1,13','1,04','0,96','0,87','0,78','0,70','0,61','0,52','0,43','0,35','0,26','0,17','0,09'];
const dop=['-344','-258','-172','-86','0,00','86','172','258','344'];
function plot(x,y,w,h,g0,g1,hd,rows,yTop,yStep,vTop,ax){
 let s=`<svg class="aria" width="${w}" height="${h}" viewBox="${x} ${y} ${w} ${h}"><rect x="${x}" y="${y}" width="${w}" height="${h}" fill="#000"/>`;
 const st=(g1-g0)/8; let p='';
 dop.forEach((_,i)=>p+=`M${Math.round(g0+i*st)-.5} ${vTop}V${ax}`);
 rows.forEach((_,i)=>p+=`M${g0} ${Math.round(yTop+i*yStep)+.5}H${g1}`);
 s+=`<path d="${p}" stroke="#3a0000"/><path d="M${x} ${ax+.5}H${x+w}" stroke="#fff"/><g fill="#c4c4c4" font-size="11">`;
 rows.forEach((l,i)=>s+=`<text x="${x+6}" y="${yTop+i*yStep+4.5}">${l}</text>`);
 s+='</g><g fill="#e4e4e4" font-size="11.5" text-anchor="middle">';
 dop.forEach((l,i)=>s+=`<text x="${g0+i*st+2.8}" y="${ax+20}">${l}</text>`);
 s+=`<text x="${hd.dp}" y="${ax+65.5}" font-size="11.65">Doppler speed (km/h)</text></g>`;
 const b=y+11.5;
 s+=`<text x="${x+.5}" y="${b-.5}" fill="#eee" font-size="11.6">Distance (km)</text><g fill="#c4c4c4" font-size="12.9"><text x="${hd.t[0]}" y="${b}">11 fps</text><text x="${hd.t[1]}" y="${b}">0 calc./s</text><text x="${hd.t[2]}" y="${b}">312 x 130</text><text x="${hd.t[3]}" y="${b}">Device: NVIDIAGeForceRTX3060Laptop</text><text x="${hd.t[4]}" y="${b+.5}" font-size="12.400" fill="#999">Radar</text></g></svg>`;
 return s;
}
const L={dp:1174,t:[1005,1054,1123,1195,1338]},Q={dp:1665.5,t:[1490.3,1539,1608.6,1680.4,1854]};
plots.innerHTML=plot(908,91,481.5,451,953.3,1369,L,dist.slice(1),128.3,17.16,111,472)+plot(1393,91,511,451,1438.4,1884.5,Q,dist.slice(1),128.3,17.16,111,472)+
 plot(908,545,481.5,460,953.3,1369,L,dist,565,18.02,565,944)+plot(1393,545,511,460,1438.4,1884.5,Q,dist,565,18.02,565,944);
</script>
</body>
</html>
